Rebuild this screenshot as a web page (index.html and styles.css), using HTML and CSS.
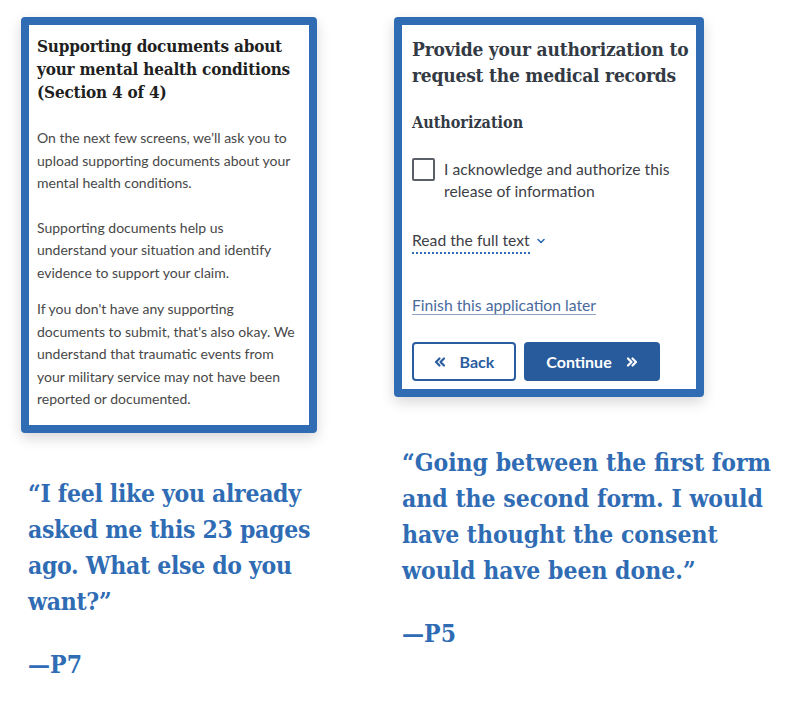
FILE: index.html
```html
<!DOCTYPE html>
<html lang="en">
<head>
<meta charset="utf-8">
<title>Research findings</title>
<link rel="stylesheet" href="styles.css">
</head>
<body>
<main class="page">
  <section class="col col-left">
    <div class="card card-left">
      <h1 class="card-title">Supporting documents about<br>your mental health conditions<br>(Section 4 of 4)</h1>
      <p class="body p1">On the next few screens, we’ll ask you to<br>upload supporting documents about your<br>mental health conditions.</p>
      <p class="body p2">Supporting documents help us<br>understand your situation and identify<br>evidence to support your claim.</p>
      <p class="body p3">If you don't have any supporting<br>documents to submit, that's also okay. We<br>understand that traumatic events from<br>your military service may not have been<br>reported or documented.</p>
    </div>
    <blockquote class="quote quote-left">
      <p class="quote-text">“I feel like you already<br>asked me this 23 pages<br>ago. What else do you<br>want?”</p>
      <p class="quote-who">—P7</p>
    </blockquote>
  </section>
  <section class="col col-right">
    <div class="card card-right">
      <h1 class="card-title title-right">Provide your authorization to<br>request the medical records</h1>
      <h2 class="sub">Authorization</h2>
      <label class="check">
        <span class="box"></span>
        <span class="check-label">I acknowledge and authorize this<br>release of information</span>
      </label>
      <div class="read">
        <span class="read-text">Read the full text</span>
        <svg class="chev" width="10" height="8" viewBox="0 0 10 8"><path d="M2 2.5 L5 5.5 L8 2.5" fill="none" stroke="#2e6db4" stroke-width="1.6" stroke-linecap="round" stroke-linejoin="round"/></svg>
      </div>
      <a class="later" href="#">Finish this application later</a>
      <div class="buttons">
        <button class="btn btn-back">
          <svg width="12" height="12" viewBox="0 0 12 12"><path d="M5.5 2.5 L2 6 L5.5 9.5 M10 2.5 L6.5 6 L10 9.5" fill="none" stroke="#2a5d9f" stroke-width="2.2" stroke-linecap="round" stroke-linejoin="round"/></svg>
          <span>Back</span>
        </button>
        <button class="btn btn-next">
          <span>Continue</span>
          <svg width="12" height="12" viewBox="0 0 12 12"><path d="M2 2.5 L5.5 6 L2 9.5 M6.5 2.5 L10 6 L6.5 9.5" fill="none" stroke="#ffffff" stroke-width="2.2" stroke-linecap="round" stroke-linejoin="round"/></svg>
        </button>
      </div>
    </div>
    <blockquote class="quote quote-right">
      <p class="quote-text">“Going between the first form<br>and the second form. I would<br>have thought the consent<br>would have been done.”</p>
      <p class="quote-who">—P5</p>
    </blockquote>
  </section>
</main>
</body>
</html>
```
FILE: styles.css
```css
html, body {
  margin: 0;
  padding: 0;
  background: #ffffff;
}

.page {
  display: flex;
  align-items: flex-start;
  gap: 77px;
  padding: 17px 0 0 21px;
}

.col {
  display: flex;
  flex-direction: column;
}

.col-left { width: 296px; }
.col-right { width: 310px; }

.card {
  box-sizing: border-box;
  border: 8px solid #2f6cb4;
  border-radius: 4px;
  background: #ffffff;
  box-shadow: 0 5px 14px rgba(0, 0, 0, 0.16);
  white-space: nowrap;
}

.card-left {
  height: 416px;
  padding: 10px 8px 0 8px;
}

.card-right {
  height: 380px;
  padding: 11px 10px 0 10px;
}

.card-title {
  margin: 0;
  font-family: "DejaVu Serif", "Liberation Serif", serif;
  font-stretch: condensed;
  font-weight: 700;
  font-size: 17px;
  line-height: 23px;
  color: #1f1f1f;
  letter-spacing: -0.2px;
}

.title-right {
  font-size: 19px;
  line-height: 26px;
  letter-spacing: -0.2px;
  color: #333a44;
}

.body {
  margin: 0;
  font-family: "Lato", "Noto Sans", sans-serif;
  font-size: 14px;
  line-height: 22.5px;
  color: #484848;
}

.p1 { margin-top: 23px; }
.p2 { margin-top: 22px; }
.p3 { margin-top: 14px; }

.sub {
  margin: 24px 0 0 0;
  font-family: "DejaVu Serif", "Liberation Serif", serif;
  font-stretch: condensed;
  font-weight: 700;
  font-size: 16px;
  line-height: 22px;
  color: #333a44;
}

.check {
  display: flex;
  align-items: flex-start;
  gap: 9px;
  margin-top: 24px;
}

.box {
  box-sizing: border-box;
  flex: none;
  width: 23px;
  height: 23px;
  border: 2px solid #5b6068;
  border-radius: 2px;
}

.check-label {
  font-family: "Lato", "Noto Sans", sans-serif;
  font-size: 15.7px;
  line-height: 22px;
  color: #3d4046;
}

.read {
  display: flex;
  align-items: center;
  gap: 6px;
  margin-top: 27px;
}

.read-text {
  font-family: "Lato", "Noto Sans", sans-serif;
  font-size: 15.7px;
  line-height: 22px;
  color: #3d4046;
  border-bottom: 2px dotted #2e6db4;
  padding-bottom: 1px;
}

.chev { margin-top: -2px; }

.later {
  display: inline-block;
  margin-top: 40px;
  font-family: "Lato", "Noto Sans", sans-serif;
  font-size: 15.7px;
  line-height: 22px;
  color: #4a6a9c;
  text-decoration: underline;
  text-decoration-color: #8fa4c4;
  text-underline-offset: 3px;
}

.buttons {
  display: flex;
  gap: 8px;
  margin-top: 26px;
}

.btn {
  box-sizing: border-box;
  height: 39px;
  display: flex;
  align-items: center;
  justify-content: center;
  border-radius: 4px;
  font-family: "Lato", "Noto Sans", sans-serif;
  font-weight: 700;
  font-size: 16px;
  cursor: pointer;
}

.btn-back {
  width: 104px;
  gap: 14px;
  background: #ffffff;
  border: 2px solid #2a5d9f;
  color: #2a5d9f;
}

.btn-next {
  width: 136px;
  gap: 14px;
  background: #285b9b;
  border: none;
  color: #ffffff;
}

.quote {
  margin: 0;
  font-family: "DejaVu Serif", "Liberation Serif", serif;
  font-stretch: condensed;
  font-weight: 700;
  color: #2f6cb4;
  white-space: nowrap;
}

.quote-left {
  margin-top: 43px;
  padding-left: 7px;
}

.quote-right {
  margin-top: 48px;
  padding-left: 8px;
}

.quote-text {
  margin: 0;
  font-size: 24.5px;
  line-height: 36px;
  letter-spacing: -0.3px;
}

.quote-right .quote-text {
  letter-spacing: 0;
}

.quote-who {
  margin: 27px 0 0 0;
  font-size: 24.5px;
  line-height: 36px;
}
```
